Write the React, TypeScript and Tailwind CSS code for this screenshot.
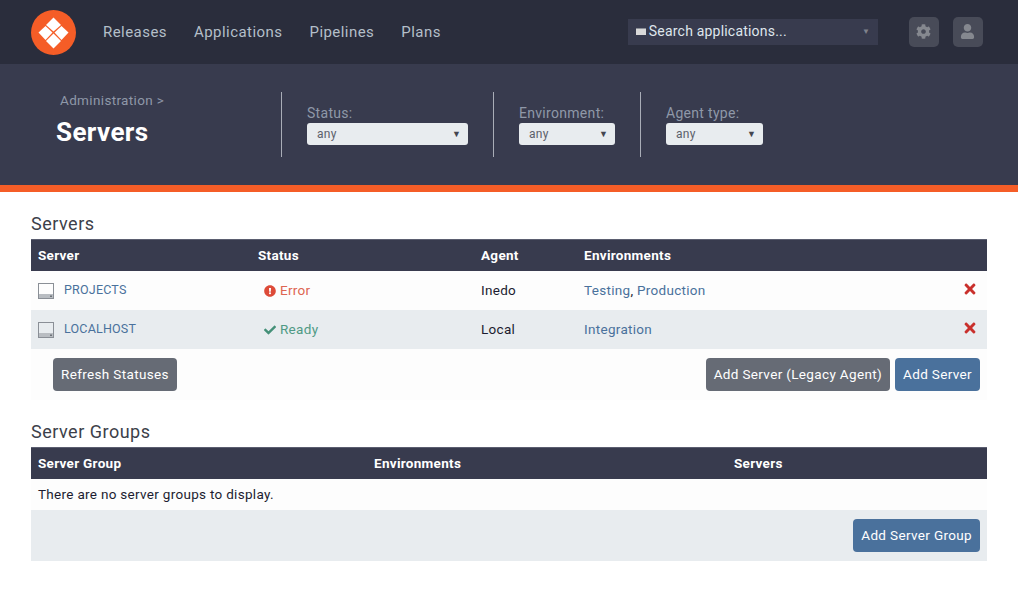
import { Fragment } from "react";
import { FaCog, FaUser, FaTimes, FaExclamationCircle, FaCheck } from "react-icons/fa";

const font = "font-['Roboto','Liberation_Sans',sans-serif]";

const navItems = ["Releases", "Applications", "Pipelines", "Plans"];

const filters = [
  { label: "Status:", width: "w-[161px]", gap: "pr-[25px]" },
  { label: "Environment:", width: "w-[96px]", gap: "pr-[25px]" },
  { label: "Agent type:", width: "w-[97px]", gap: "" },
];

const servers = [
  { name: "PROJECTS", status: "error", agent: "Inedo", envs: ["Testing", "Production"] },
  { name: "LOCALHOST", status: "ready", agent: "Local", envs: ["Integration"] },
];

function Logo() {
  return (
    <svg width="45" height="45" viewBox="0 0 45 45">
      <circle cx="22.5" cy="22.5" r="22.5" fill="#f55d27" />
      <g fill="#fff">
        <path d="M22.5 7.5 30 15 22.5 21.5 15 15Z" transform="translate(0 0)" />
        <path d="M7.5 22.5 14.5 16 21.5 22.5 14.5 30Z" />
        <path d="M37.5 22.5 30.5 16 23.5 22.5 30.5 30Z" />
        <path d="M22.5 23.5 30 31 22.5 38.5 15 31Z" />
      </g>
    </svg>
  );
}

function ServerIcon() {
  return (
    <svg width="16" height="16" viewBox="0 0 16 16" className="shrink-0">
      <rect x="0.5" y="0.5" width="15" height="15" fill="none" stroke="#8a8f96" />
      <rect x="1" y="11" width="14" height="4" fill="#b9bdc2" />
      <rect x="12" y="12.5" width="2" height="1.5" fill="#6d7278" />
    </svg>
  );
}

function Button({ children, color }: { children: string; color: "gray" | "blue" }) {
  return (
    <button
      className={`h-[33px] rounded-[4px] px-2 text-[13.5px] tracking-[0.35px] text-white ${
        color === "gray" ? "bg-[#666b75]" : "bg-[#4a719c]"
      }`}
    >
      {children}
    </button>
  );
}

function Select({ width }: { width: string }) {
  return (
    <div className={`flex h-[22px] items-center justify-between rounded-[3px] bg-[#e8ecef] pl-[10px] pr-[7px] ${width}`}>
      <span className="text-[12px] tracking-[0.3px] text-[#5c606b]">any</span>
      <span className="text-[9px] leading-none text-[#44464f]">▼</span>
    </div>
  );
}

export default function App() {
  return (
    <div className={`min-h-[607px] bg-white ${font}`}>
      {/* Top nav */}
      <nav className="flex h-16 items-center bg-[#2a2d3c] pl-[31px]">
        <Logo />
        <div className="ml-[27px] flex gap-[27px]">
          {navItems.map((item) => (
            <span key={item} className="text-[15px] tracking-[0.45px] text-[#b4bfc9]">
              {item}
            </span>
          ))}
        </div>
        <div className="ml-[187px] flex h-[26px] w-[250px] items-center bg-[#383b4e] pl-2 pr-2 -mt-[1px]">
          <span className="mr-[3px] h-[7px] w-[10px] border-t border-[#8a8d96] bg-[#d9d9d9]" />
          <span className="text-[14px] tracking-[0.2px] text-[#dfe6ec]">Search applications...</span>
          <span className="ml-auto text-[8px] text-[#7f828c]">▼</span>
        </div>
        <div className="ml-[31px] flex h-[30px] w-[30px] items-center justify-center rounded-[5px] bg-[#484b58] -mt-[1px]">
          <FaCog className="text-[15px] text-[#85888f]" />
        </div>
        <div className="ml-[14px] flex h-[30px] w-[30px] items-center justify-center rounded-[5px] bg-[#484b58] -mt-[1px]">
          <FaUser className="text-[15px] text-[#85888f]" />
        </div>
      </nav>

      {/* Page header */}
      <header className="flex h-[128px] items-start border-b-[7px] border-[#f55d27] bg-[#383b4e] pl-[56px] pt-7">
        <div className="w-[225px]">
          <div className="ml-1 text-[13.5px] leading-4 tracking-[0.35px] text-[#8f98a8]">Administration &gt;</div>
          <h1 className="mt-[8px] text-[26px] font-bold leading-8 tracking-[0.4px] text-white">Servers</h1>
        </div>
        {filters.map((f) => (
          <div key={f.label} className={`flex h-[65px] border-l border-[#a9adb7] pl-[25px] ${f.gap}`}>
            <div className="pt-[12px]">
              <div className="mb-[1px] text-[14px] leading-[18px] tracking-[0.3px] text-[#8f98a8]">{f.label}</div>
              <Select width={f.width} />
            </div>
          </div>
        ))}
      </header>

      <main className="px-[31px]">
        {/* Servers */}
        <h2 className="mt-[21px] h-[26px] text-[18px] leading-[22px] tracking-[0.5px] text-[#3c3f4a]">Servers</h2>
        <div className="grid grid-cols-[220px_223px_103px_1fr] text-[13.5px] tracking-[0.3px]">
          {["Server", "Status", "Agent", "Environments"].map((h) => (
            <div key={h} className="flex h-8 items-center border-t border-[#5b5e70] bg-[#383b4e] pl-[7px] font-bold text-white">
              {h}
            </div>
          ))}
          {servers.map((s, i) => {
            const row = i % 2 === 0 ? "bg-[#fdfdfd]" : "bg-[#e8ecef]";
            return (
              <Fragment key={s.name}>
                <div className={`flex h-[39px] items-center gap-[10px] pl-[7px] ${row}`}>
                  <ServerIcon />
                  <span className="text-[12.5px] tracking-[0.2px] text-[#4a719c]">{s.name}</span>
                </div>
                <div className={`flex h-[39px] items-center gap-1 pl-[13px] ${row}`}>
                  {s.status === "error" ? (
                    <>
                      <FaExclamationCircle className="text-[12px] text-[#dd4b39]" />
                      <span className="text-[#dd6552]">Error</span>
                    </>
                  ) : (
                    <>
                      <FaCheck className="text-[12px] text-[#449078]" />
                      <span className="text-[#4f9a85]">Ready</span>
                    </>
                  )}
                </div>
                <div className={`flex h-[39px] items-center pl-[7px] text-[#1c1c30] ${row}`}>{s.agent}</div>
                <div className={`flex h-[39px] items-center justify-between pl-[7px] pr-[9px] ${row}`}>
                  <span className="text-[#4a719c]">
                    {s.envs.map((e, j) => (
                      <Fragment key={e}>
                        {j > 0 && <span className="text-[#1c1c30]">, </span>}
                        {e}
                      </Fragment>
                    ))}
                  </span>
                  <FaTimes className="-mt-1 text-[16px] text-[#c9302c]" />
                </div>
              </Fragment>
            );
          })}
        </div>
        <div className="flex h-[51px] items-center bg-[#fdfdfd] pl-[22px] pr-[7px]">
          <Button color="gray">Refresh Statuses</Button>
          <div className="ml-auto flex gap-[5px]">
            <Button color="gray">Add Server (Legacy Agent)</Button>
            <Button color="blue">Add Server</Button>
          </div>
        </div>

        {/* Server Groups */}
        <h2 className="mt-[21px] h-[26px] text-[18px] leading-[22px] tracking-[0.5px] text-[#3c3f4a]">Server Groups</h2>
        <div className="grid grid-cols-[336px_360px_1fr] text-[13.5px] tracking-[0.3px]">
          {["Server Group", "Environments", "Servers"].map((h) => (
            <div key={h} className="flex h-8 items-center border-t border-[#5b5e70] bg-[#383b4e] pl-[7px] font-bold text-white">
              {h}
            </div>
          ))}
        </div>
        <div className="flex h-[31px] items-center bg-[#fdfdfd] pl-[7px] text-[13.5px] tracking-[0.3px] text-[#1c1c30]">
          There are no server groups to display.
        </div>
        <div className="flex h-[51px] items-center justify-end bg-[#e8ecef] pr-[7px]">
          <Button color="blue">Add Server Group</Button>
        </div>
      </main>
    </div>
  );
}
